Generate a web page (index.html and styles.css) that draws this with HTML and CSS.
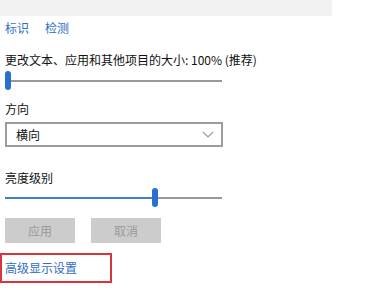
FILE: index.html
```html
<!DOCTYPE html>
<html lang="zh">
<head>
<meta charset="utf-8">
<link rel="stylesheet" href="styles.css">
</head>
<body>
<div class="page">
  <div class="topbar"></div>
  <div class="links">
    <a class="link">标识</a>
    <a class="link">检测</a>
  </div>
  <div class="label scale-label">更改文本、应用和其他项目的大小: 100% (推荐)</div>
  <div class="slider slider-scale">
    <div class="thumb"></div>
    <div class="track track-gray"></div>
  </div>
  <div class="label orient-label">方向</div>
  <div class="select">
    <span class="select-text">横向</span>
    <svg class="chevron" width="12" height="7" viewBox="0 0 12 7"><path d="M1 1 L6 6 L11 1" fill="none" stroke="#9a9a9a" stroke-width="1.2"/></svg>
  </div>
  <div class="label bright-label">亮度级别</div>
  <div class="slider slider-bright">
    <div class="track track-blue"></div>
    <div class="thumb"></div>
    <div class="track track-gray"></div>
  </div>
  <div class="buttons">
    <div class="btn">应用</div>
    <div class="btn">取消</div>
  </div>
  <div class="advanced">
    <a class="link">高级显示设置</a>
  </div>
</div>
</body>
</html>
```

FILE: styles.css
```css
html, body {
  margin: 0;
  padding: 0;
  background: #ffffff;
}
body {
  font-family: "Noto Sans CJK SC", "Noto Sans", sans-serif;
  font-size: 12px;
  line-height: 16px;
  color: #111;
}
.page {
  padding-left: 5px;
  display: flex;
  flex-direction: column;
  align-items: flex-start;
}
.topbar {
  width: 332px;
  height: 16px;
  margin-left: -5px;
  background: #f2f2f2;
}
.links {
  display: flex;
  gap: 16px;
  margin-top: 4px;
}
.link {
  color: #2f6fc0;
  cursor: pointer;
}
.scale-label {
  margin-top: 16px;
}
.slider {
  display: flex;
  align-items: center;
  width: 217px;
  height: 19px;
}
.slider-scale {
  margin-top: 3px;
}
.track {
  height: 2px;
}
.track-gray {
  flex: 1;
  background: #999;
}
.track-blue {
  width: 147px;
  background: #3f7fc6;
}
.thumb {
  width: 6px;
  height: 19px;
  border-radius: 3px;
  background: #2a6fcf;
  flex: none;
}
.orient-label {
  margin-top: 11px;
}
.select {
  margin-top: 5px;
  width: 207px;
  height: 21px;
  border: 2px solid #9c9c9c;
  display: flex;
  align-items: center;
  justify-content: space-between;
  padding: 0 7px 0 0;
  box-sizing: content-box;
}
.select-text {
  padding-left: 9px;
}
.chevron {
  display: block;
}
.bright-label {
  margin-top: 23px;
}
.slider-bright {
  margin-top: 2px;
}
.buttons {
  display: flex;
  gap: 16px;
  margin-top: 11px;
}
.btn {
  width: 70px;
  height: 25px;
  background: #cccccc;
  color: #9a9a9a;
  display: flex;
  align-items: center;
  justify-content: center;
}
.advanced {
  margin-top: 10px;
  margin-left: -5px;
  width: 105px;
  height: 26px;
  border: 2px solid #d8363f;
  padding-left: 3px;
  display: flex;
  align-items: center;
  box-sizing: content-box;
}
```
